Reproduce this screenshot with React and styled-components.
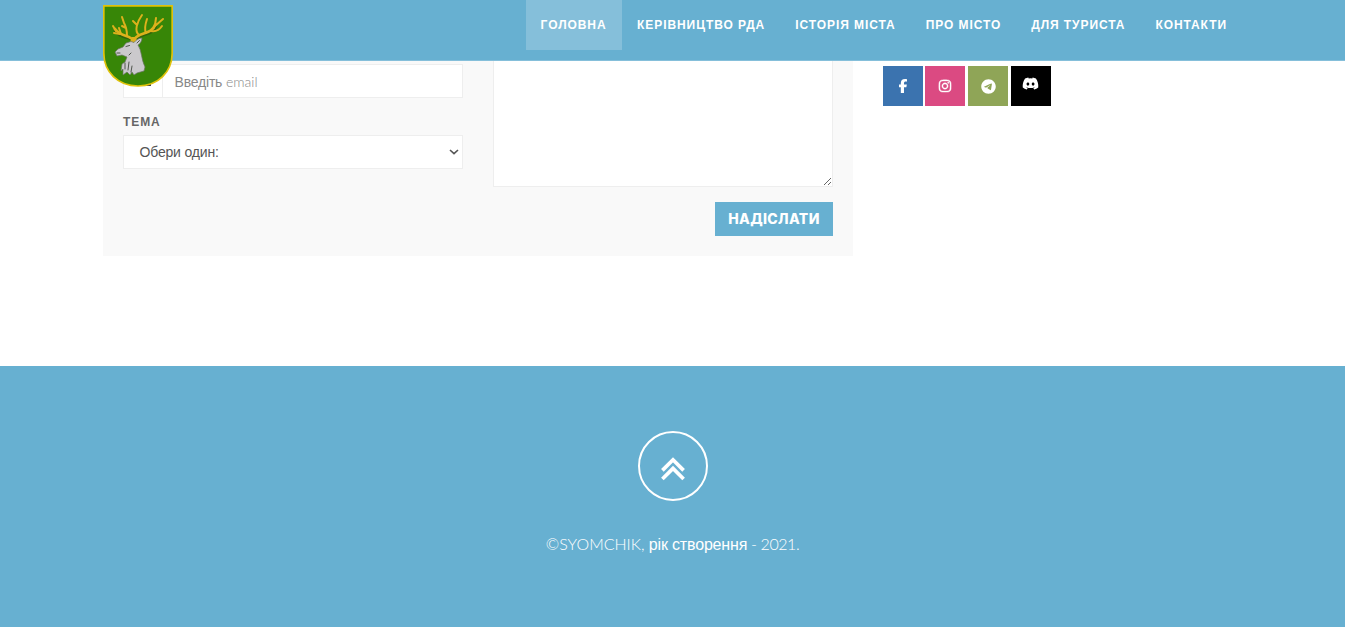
import React from 'react';
import styled, { createGlobalStyle } from 'styled-components';
import { FaFacebookF, FaInstagram, FaDiscord, FaTelegram } from 'react-icons/fa6';

const GlobalStyle = createGlobalStyle`
  * { box-sizing: border-box; }
  body { margin: 0; background: #fff; overflow: hidden; font-family: Lato, "Liberation Sans", sans-serif; }
`;

const Page = styled.div`
  height: 627px;
  display: flex;
  flex-direction: column;
  overflow: hidden;
`;
const Header = styled.header`
  height: 61px;
  flex: none;
  position: relative;
  z-index: 2;
  display: flex;
  justify-content: space-between;
  align-items: flex-start;
  padding: 0 103px;
  background: #67b0d1;
  border-bottom: 1px solid #85bfda;
`;
const Brand = styled.a`
  display: block;
  margin-top: 5px;
  height: 82px;
  svg { display: block; }
`;
const Nav = styled.nav`
  display: flex;
`;
const NavLink = styled.a`
  height: 50px;
  padding: 15px;
  font: bold 12px/20px "Liberation Sans", sans-serif;
  letter-spacing: 0.93px;
  white-space: nowrap;
  color: #fff;
  background: ${(p) => (p.$active ? 'rgba(255,255,255,0.2)' : 'transparent')};
  &:first-child { padding-right: 15.5px; margin-left: -0.5px; }
`;
const Content = styled.main`
  height: 305px;
  flex: none;
  display: flex;
  align-items: flex-start;
  gap: 30px;
  padding-left: 103px;
`;
const Form = styled.form`
  width: 750px;
  height: 195px;
  padding: 0 20px;
  background: #f9f9f9;
  display: grid;
  grid-template-columns: 340px 340px;
  column-gap: 30px;
`;
const Column = styled.div`
  display: flex;
  flex-direction: column;
`;
const InputGroup = styled.div`
  display: flex;
  width: 340px;
  height: 34px;
  margin-top: 3px;
  background: #fff;
  border: 1px solid #eee;
`;
const Addon = styled.span`
  width: 39px;
  border-right: 1px solid #eee;
  display: flex;
  align-items: center;
  justify-content: center;
`;
const Envelope = styled.i`
  width: 11px;
  height: 9px;
  margin-left: 4px;
  background: #444;
`;
const EmailField = styled.div`
  flex: 1;
  padding: 7px 11.5px 0;
  font: 300 14px/20px Lato, "Liberation Sans", sans-serif;
  white-space: pre;
  color: #888;
`;
const Label = styled.label`
  margin-top: 14px;
  height: 20px;
  font: bold 12px/20px "Liberation Sans", sans-serif;
  letter-spacing: 0.9px;
  color: #666;
`;
const Select = styled.div`
  width: 340px;
  height: 34px;
  margin-top: 3px;
  padding: 0 3px 0 15.5px;
  display: flex;
  align-items: center;
  justify-content: space-between;
  background: #fff;
  border: 1px solid #eee;
  color: #555;
  font: 14px/20px "Liberation Sans", sans-serif;
  letter-spacing: -0.18px;
`;
const Message = styled.textarea`
  width: 340px;
  height: 126px;
  border: 1px solid #eee;
  border-top: 0;
  background: #fff;
  resize: vertical;
  outline: 0;
`;
const Submit = styled.button`
  align-self: flex-end;
  width: 118px;
  height: 34px;
  margin-top: 15px;
  padding: 0;
  border: 0;
  background: #67b0d1;
  color: #fff;
  font: 800 14px/34px Inter, sans-serif;
  letter-spacing: 0.35px;
  white-space: nowrap;
`;
const Socials = styled.div`
  display: flex;
  gap: 2.6px;
  padding-top: 5px;
`;
const Social = styled.a`
  width: 40px;
  height: 40px;
  display: flex;
  align-items: center;
  justify-content: center;
  padding-bottom: ${(p) => p.$lift || 0}px;
  color: #fff;
  background: ${(p) => p.$bg};
  &:nth-child(2) { margin-left: -0.4px; margin-right: 0.4px; }
  &:nth-child(2) svg { stroke: #fff; stroke-width: 14px; }
`;
const Footer = styled.footer`
  flex: 1;
  padding-top: 65px;
  background: #67b0d1;
  color: #fff;
  display: flex;
  flex-direction: column;
  align-items: center;
`;
const ToTop = styled.a`
  width: 70px;
  height: 70px;
  flex: none;
  border: 2px solid #fff;
  border-radius: 50%;
  display: flex;
  align-items: center;
  justify-content: center;
  padding-top: 6px;
`;
const Copyright = styled.p`
  margin: 30px 0 0;
  font: 300 16px/26px Lato, "Liberation Sans", sans-serif;
  white-space: nowrap;
`;
const Run = styled.span`
  letter-spacing: ${(p) => p.$ls}px;
`;
const Cyrillic = styled(Run)`
  font-family: "Liberation Sans", sans-serif;
`;

const links = ['ГОЛОВНА', 'КЕРІВНИЦТВО РДА', 'ІСТОРІЯ МІСТА', 'ПРО МІСТО', 'ДЛЯ ТУРИСТА', 'КОНТАКТИ'];

function Crest() {
  return (
    <svg width="70" height="82" viewBox="0 0 70 82">
      <path d="M.8.8H69.2V48C69.2 67 55 81 35 81S.8 67 .8 48Z" fill="#378607" stroke="#dfc20b" strokeWidth="1.7" />
      <g fill="none" stroke="#2c4a0c" strokeLinecap="round" strokeLinejoin="round" opacity=".55" transform="translate(.5 .8)">
        <path strokeWidth="3.6" d="M30 35C27 30 18 33 12 25M31 35C34 27 50 30 52 20" />
      </g>
      <g fill="none" stroke="#dcb11c" strokeLinecap="round" strokeLinejoin="round">
        <path strokeWidth="2.8" d="M30 35C27 30 18 32 12 24" />
        <path strokeWidth="2" d="M13 26 10 21M17 29 11 28M18 29 16 23M24 31C24 27 24 23 21 18L19 12M23 23 19 21" />
        <path strokeWidth="2.8" d="M31 35C34 27 49 30 52 20" />
        <path strokeWidth="2" d="M52 20 53 13M52 21 60 14M36 30C31 26 34 17 39 10M34 20 30 16M43 28C41 24 43 17 44 14M48 26C53 27 57 24 59 21" />
      </g>
      <path d="M29 32H33L34 36 31 38 27 37Z" fill="#dcb11c" />
      <path d="M12 47 15 44 20 42 23 38 28 36.5 31 37.5C33 35 36 33 39 33 39 36 37 39 35 40 39 46 38 54 42 62L41 66 34 68 31 70 29 67 27 70 24 67 20 70 20 64 18 66 19 59 22 57 24 52 19 50 14 51Z" fill="#cbc9cc" stroke="#697263" strokeWidth=".7" strokeLinejoin="round" />
      <path d="M23 41.5 26.5 40.5M34 38 36.5 35.5M14 48 17 48M26 50 28 48M22 58 22 64M26 57 25 65M29 61 28 67" fill="none" stroke="#50554d" strokeWidth="1" strokeLinecap="round" />
    </svg>
  );
}

export default function App() {
  return (
    <Page>
      <GlobalStyle />
      <Header>
        <Brand><Crest /></Brand>
        <Nav>
          {links.map((text, i) => <NavLink key={text} $active={i === 0}>{text}</NavLink>)}
        </Nav>
      </Header>
      <Content>
        <Form>
          <Column>
            <InputGroup>
              <Addon><Envelope /></Addon>
              <EmailField><Cyrillic $ls={-0.2}>Введіть</Cyrillic><Run $ls={0}> email</Run></EmailField>
            </InputGroup>
            <Label>ТЕМА</Label>
            <Select>
              Обери один:
              <svg width="10" height="6" viewBox="0 0 10 6"><path d="M1 1 5 4.7 9 1" fill="none" stroke="#555" strokeWidth="1.6" /></svg>
            </Select>
          </Column>
          <Column>
            <Message />
            <Submit type="button">НАДІСЛАТИ</Submit>
          </Column>
        </Form>
        <Socials>
          <Social $bg="#3b73af"><FaFacebookF size={14} /></Social>
          <Social $bg="#db4a82"><FaInstagram size={14} /></Social>
          <Social $bg="#8fa557"><FaTelegram size={15} /></Social>
          <Social $bg="#000" $lift={6}><FaDiscord size={17} /></Social>
        </Socials>
      </Content>
      <Footer>
        <ToTop>
          <svg width="26" height="24" viewBox="0 0 26 24">
            <path d="M2.4 13.4 13 2.8 23.6 13.4M2.4 22 13 11.4 23.6 22" fill="none" stroke="#fff" strokeWidth="3.7" />
          </svg>
        </ToTop>
        <Copyright><Run $ls={0}>©SYOMCHIK, </Run><Cyrillic $ls={-0.17}>рік створення</Cyrillic><Run $ls={-0.42}> - 2021.</Run></Copyright>
      </Footer>
    </Page>
  );
}
